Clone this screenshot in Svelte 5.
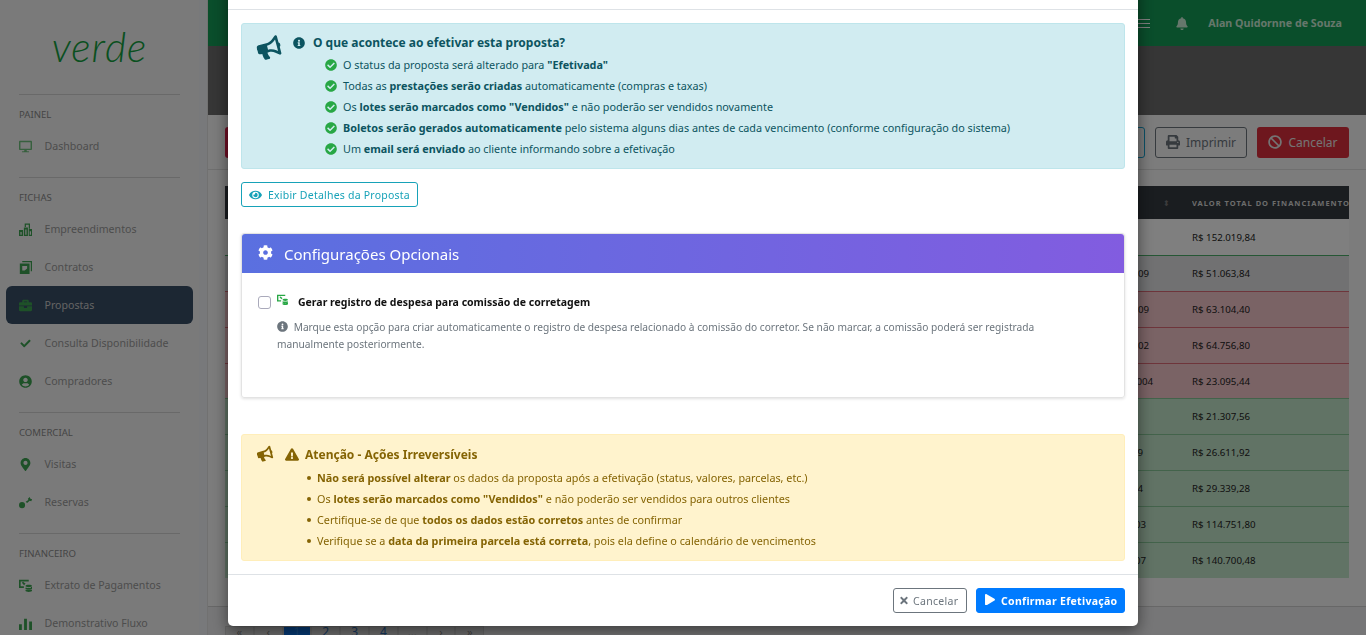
<script>
  const icons = {
    desktop: ["0 0 576 512", "M528 0H48C21.5 0 0 21.5 0 48v320c0 26.5 21.5 48 48 48h192l-16 48h-72c-13.3 0-24 10.7-24 24s10.7 24 24 24h272c13.3 0 24-10.7 24-24s-10.7-24-24-24h-72l-16-48h192c26.5 0 48-21.5 48-48V48c0-26.5-21.5-48-48-48zm-16 352H64V64h448v288z"],
    building: ["0 0 512 512", "M0 272h160v240H0zM192 176h160v336H192zM224 16h208v208h-48V64H272v96h-48zM384 240h128v272H384zM56 352v112h48V352zM248 256v208h48V256zM424 320v144h48V320z"],
    copy: ["0 0 512 512", "M128 0h384v400h-48V48H128zM32 96h384v416H32zM128 200v176h96l96-80V200z"],
    briefcase: ["0 0 512 512", "M320 336c0 8.84-7.16 16-16 16h-96c-8.84 0-16-7.16-16-16v-48H0v144c0 25.6 22.4 48 48 48h416c25.6 0 48-22.4 48-48V288H320v48zm144-208h-80V80c0-25.6-22.4-48-48-48H176c-25.6 0-48 22.4-48 48v48H48c-25.6 0-48 22.4-48 48v80h512v-80c0-25.6-22.4-48-48-48zm-144 0H192V96h128v32z"],
    check: ["-70 -70 652 652", "M173.898 439.404l-166.4-166.4c-9.997-9.997-9.997-26.206 0-36.204l36.203-36.204c9.997-9.998 26.207-9.998 36.204 0L192 312.69 432.095 72.596c9.997-9.997 26.207-9.997 36.204 0l36.203 36.204c9.997 9.997 9.997 26.206 0 36.204l-294.4 294.401c-9.998 9.997-26.207 9.997-36.204-.001z"],
    user: ["0 0 496 512", "M248 8C111 8 0 119 0 256s111 248 248 248 248-111 248-248S385 8 248 8zm0 96c48.6 0 88 39.4 88 88s-39.4 88-88 88-88-39.4-88-88 39.4-88 88-88zm0 344c-58.7 0-111.3-26.6-146.5-68.2 18.8-35.4 55.6-59.8 98.5-59.8 2.4 0 4.8.4 7.1 1.1 13 4.2 26.6 6.9 40.9 6.9 14.3 0 28-2.7 40.9-6.9 2.3-.7 4.7-1.1 7.1-1.1 42.9 0 79.7 24.4 98.5 59.8C359.3 421.4 306.7 448 248 448z"],
    marker: ["0 0 384 512", "M172.268 501.67C26.97 291.031 0 269.413 0 192 0 85.961 85.961 0 192 0s192 85.961 192 192c0 77.413-26.97 99.031-172.268 309.67-9.535 13.774-29.93 13.773-39.464 0zM192 272c44.183 0 80-35.817 80-80s-35.817-80-80-80-80 35.817-80 80 35.817 80 80 80z"],
    key: ["0 0 512 512", "M120 240a120 120 0 1 1 0 240 120 120 0 0 1 0-240zM260 230l110-70-20-50 70-70 30 70 70 20-40 80-60-20-100 90z"],
    money: ["0 0 512 512", "M0 32h384v64H64v192h128v64H0zM112 144l48-32 112 80h-64l32 32-40 24zM256 272c0-26 56-48 128-48s128 22 128 48-56 48-128 48-128-22-128-48zM256 336c30 24 226 24 256 0v44c0 26-56 48-128 48s-128-22-128-48zM256 420c30 24 226 24 256 0v44c0 26-56 48-128 48s-128-22-128-48z"],
    chart: ["0 0 512 512", "M0 288h112v224H0zM200 64h112v448H200zM400 176h112v336H400z"],
    bullhorn: ["0 0 576 512", "M576 240c0-23.63-12.95-44.04-32-55.12V32.01C544 23.26 537.02 0 512 0c-7.12 0-14.19 2.38-19.98 7.02l-85.03 68.03C364.28 109.19 310.67 128 256 128H64c-35.35 0-64 28.65-64 64v96c0 35.35 28.65 64 64 64h33.7c-1.39 10.48-2.18 21.14-2.18 32 0 39.77 9.26 77.35 25.56 110.94 5.19 10.69 16.52 17.06 28.4 17.06h74.28c26.05 0 41.69-29.84 25.9-50.56-16.4-21.52-26.15-48.36-26.15-77.44 0-11.11 1.62-21.79 4.41-32H256c54.67 0 108.28 18.81 150.98 52.95l85.03 68.03a32.023 32.023 0 0 0 19.98 7.02c24.92 0 32-22.78 32-32V295.13C563.05 284.04 576 263.63 576 240zm-96 141.42l-33.05-26.44C392.95 311.78 325.12 288 256 288v-96c69.12 0 136.95-23.78 190.95-66.98L480 98.58v282.84z"],
    info: ["0 0 512 512", "M256 8C119.043 8 8 119.083 8 256c0 136.997 111.043 248 248 248s248-111.003 248-248C504 119.083 392.957 8 256 8zm0 110c23.196 0 42 18.804 42 42s-18.804 42-42 42-42-18.804-42-42 18.804-42 42-42zm56 254c0 6.627-5.373 12-12 12h-88c-6.627 0-12-5.373-12-12v-24c0-6.627 5.373-12 12-12h12v-64h-12c-6.627 0-12-5.373-12-12v-24c0-6.627 5.373-12 12-12h64c6.627 0 12 5.373 12 12v100h12c6.627 0 12 5.373 12 12v24z"],
    circleCheck: ["0 0 512 512", "M504 256c0 136.967-111.033 248-248 248S8 392.967 8 256 119.033 8 256 8s248 111.033 248 248zM227.314 387.314l184-184c6.248-6.248 6.248-16.379 0-22.627l-22.627-22.627c-6.248-6.249-16.379-6.249-22.628 0L216 308.118l-70.059-70.059c-6.248-6.248-16.379-6.248-22.628 0l-22.627 22.627c-6.248 6.248-6.248 16.379 0 22.627l104 104c6.249 6.249 16.379 6.249 22.628.001z"],
    triangle: ["0 0 576 512", "M569.517 440.013C587.975 472.007 564.806 512 527.94 512H48.054c-36.937 0-59.999-40.055-41.577-71.987L246.423 23.985c18.467-32.009 64.72-31.951 83.154 0l239.94 416.028zM288 354c-25.405 0-46 20.595-46 46s20.595 46 46 46 46-20.595 46-46-20.595-46-46-46zm-43.673-165.346l7.418 136c.347 6.364 5.609 11.346 11.982 11.346h48.546c6.373 0 11.635-4.982 11.982-11.346l7.418-136c.375-6.874-5.098-12.654-11.982-12.654h-63.383c-6.884 0-12.356 5.78-11.981 12.654z"],
    eye: ["0 0 576 512", "M572.52 241.4C518.29 135.59 410.93 64 288 64S57.68 135.64 3.48 241.41a32.35 32.35 0 0 0 0 29.19C57.71 376.41 165.07 448 288 448s230.32-71.64 284.52-177.41a32.35 32.35 0 0 0 0-29.19zM288 400a144 144 0 1 1 144-144 143.93 143.93 0 0 1-144 144zm0-240a95.31 95.31 0 0 0-25.31 3.79 47.85 47.85 0 0 1-66.9 66.9A95.78 95.78 0 1 0 288 160z"],
    cog: ["0 0 512 512", "M487.4 315.7l-42.6-24.6c4.3-23.2 4.3-47 0-70.2l42.6-24.6c4.9-2.8 7.1-8.6 5.5-14-11.1-35.6-30-67.8-54.7-94.6-3.8-4.1-10-5.1-14.8-2.3L380.8 110c-17.9-15.4-38.5-27.3-60.8-35.1V25.8c0-5.6-3.9-10.5-9.4-11.7-36.7-8.2-74.3-7.8-109.2 0-5.5 1.2-9.4 6.1-9.4 11.7V75c-22.2 7.9-42.8 19.8-60.8 35.1L88.7 85.5c-4.9-2.8-11-1.9-14.8 2.3-24.7 26.7-43.6 58.9-54.7 94.6-1.7 5.4.6 11.2 5.5 14L67.3 221c-4.3 23.2-4.3 47 0 70.2l-42.6 24.6c-4.9 2.8-7.1 8.6-5.5 14 11.1 35.6 30 67.8 54.7 94.6 3.8 4.1 10 5.1 14.8 2.3l42.6-24.6c17.9 15.4 38.5 27.3 60.8 35.1v49.2c0 5.6 3.9 10.5 9.4 11.7 36.7 8.2 74.3 7.8 109.2 0 5.5-1.2 9.4-6.1 9.4-11.7v-49.2c22.2-7.9 42.8-19.8 60.8-35.1l42.6 24.6c4.9 2.8 11 1.9 14.8-2.3 24.7-26.7 43.6-58.9 54.7-94.6 1.5-5.5-.7-11.3-5.6-14.1zM256 336c-44.1 0-80-35.9-80-80s35.9-80 80-80 80 35.9 80 80-35.9 80-80 80z"],
    times: ["0 0 352 512", "M242.72 256l100.07-100.07c12.28-12.28 12.28-32.19 0-44.48l-22.24-22.24c-12.28-12.28-32.19-12.28-44.48 0L176 189.28 75.93 89.21c-12.28-12.28-32.19-12.28-44.48 0L9.21 111.45c-12.28 12.28-12.28 32.19 0 44.48L109.28 256 9.21 356.07c-12.28 12.28-12.28 32.19 0 44.48l22.24 22.24c12.28 12.28 32.2 12.28 44.48 0L176 322.72l100.07 100.07c12.28 12.28 32.2 12.28 44.48 0l22.24-22.24c12.28-12.28 12.28-32.19 0-44.48L242.72 256z"],
    play: ["0 0 448 512", "M424.4 214.7L72.4 6.6C43.8-10.3 0 6.1 0 47.9V464c0 37.5 40.7 60.1 72.4 41.3l352-208c31.4-18.5 31.5-64.1 0-82.6z"],
    ban: ["0 0 512 512", "M256 8C119.034 8 8 119.033 8 256s111.034 248 248 248 248-111.034 248-248S392.967 8 256 8zm130.108 117.892c65.448 65.448 70 165.481 20.677 235.637L150.47 105.216c70.204-49.356 170.226-44.735 235.638 20.676zM125.892 386.108c-65.448-65.448-70-165.481-20.677-235.637L361.53 406.784c-70.203 49.356-170.226 44.736-235.638-20.676z"],
    print: ["0 0 512 512", "M448 192V77.25c0-8.49-3.37-16.62-9.37-22.63L393.37 9.37c-6-6-14.14-9.37-22.63-9.37H96C78.33 0 64 14.33 64 32v160c-35.35 0-64 28.65-64 64v112c0 8.84 7.16 16 16 16h48v96c0 17.67 14.33 32 32 32h320c17.67 0 32-14.33 32-32v-96h48c8.84 0 16-7.16 16-16V256c0-35.35-28.65-64-64-64zm-64 256H128v-96h256v96zm0-224H128V64h192v48c0 8.84 7.16 16 16 16h48v96zm48 72c-13.25 0-24-10.75-24-24 0-13.26 10.75-24 24-24s24 10.74 24 24c0 13.25-10.75 24-24 24z"],
    bell: ["0 0 448 512", "M224 512c35.32 0 63.97-28.65 63.97-64H160.03c0 35.35 28.65 64 63.97 64zm215.39-149.71c-19.32-20.76-55.47-51.99-55.47-154.29 0-77.7-54.48-139.9-127.94-155.16V32c0-17.67-14.32-32-31.98-32s-31.98 14.33-31.98 32v20.84C118.56 68.1 64.08 130.3 64.08 208c0 102.3-36.15 133.53-55.47 154.29-6 6.45-8.66 14.16-8.61 21.71.11 16.4 12.98 32 32.1 32h383.8c19.12 0 32-15.6 32.1-32 .05-7.55-2.61-15.27-8.61-21.71z"]
  };

  const nav = [
    { title: "PAINEL", items: [{ label: "Dashboard", icon: "desktop", light: true }] },
    {
      title: "FICHAS",
      items: [
        { label: "Empreendimentos", icon: "building" },
        { label: "Contratos", icon: "copy" },
        { label: "Propostas", icon: "briefcase", active: true },
        { label: "Consulta Disponibilidade", icon: "check" },
        { label: "Compradores", icon: "user" }
      ]
    },
    {
      title: "COMERCIAL",
      items: [
        { label: "Visitas", icon: "marker" },
        { label: "Reservas", icon: "key" }
      ]
    },
    {
      title: "FINANCEIRO",
      items: [
        { label: "Extrato de Pagamentos", icon: "money" },
        { label: "Demonstrativo Fluxo", icon: "chart" }
      ]
    }
  ];

  // end: how far the partly hidden text of the column reaches past the modal edge
  const rows = [
    { doc: "", end: 0, value: "R$ 152.019,84", tone: "plain" },
    { doc: "09", end: 43, value: "R$ 51.063,84", tone: "grey" },
    { doc: "09", end: 43, value: "R$ 63.104,40", tone: "red" },
    { doc: "02", end: 43, value: "R$ 64.756,80", tone: "red" },
    { doc: "004", end: 39, value: "R$ 23.095,44", tone: "red" },
    { doc: "", end: 0, value: "R$ 21.307,56", tone: "green" },
    { doc: "9", end: 49, value: "R$ 26.611,92", tone: "green" },
    { doc: "4", end: 49, value: "R$ 29.339,28", tone: "green" },
    { doc: "03", end: 46, value: "R$ 114.751,80", tone: "green" },
    { doc: "07", end: 46, value: "R$ 140.700,48", tone: "green" }
  ];

  const pages = ["«", "‹", "1", "2", "3", "4", "...", "›", "»"];
</script>

{#snippet icon(name, cls)}
  <svg class={cls} viewBox={icons[name][0]} fill="currentColor" aria-hidden="true"><path d={icons[name][1]} /></svg>
{/snippet}

<div class="page">
  <aside class="sidebar">
    <div class="nav-scroll">
      <div class="logo">verde</div>
      {#each nav as group}
        <div class="group">
          <div class="group-title">{group.title}</div>
          {#each group.items as item}
            <div class="nav-item" class:active={item.active}>
              {@render icon(item.icon, item.light ? "nav-icon light" : "nav-icon")}
              <span>{item.label}</span>
            </div>
          {/each}
        </div>
      {/each}
    </div>
    <div class="scrollbar"></div>
  </aside>

  <main class="main">
    <header class="topbar">
      <div class="burger"><i></i><i></i><i></i></div>
      {@render icon("bell", "bell")}
      <span class="user">Alan Quidornne de Souza</span>
    </header>
    <div class="hero"></div>
    <section class="content">
      <div class="toolbar">
        <button class="tb danger-left" aria-label="Ação"></button>
        <span class="grow"></span>
        <button class="tb info-edge" aria-label="Ação"></button>
        <button class="tb outline">{@render icon("print", "tb-icon")} Imprimir</button>
        <button class="tb danger">{@render icon("ban", "tb-icon")} Cancelar</button>
      </div>
      <div class="table">
        <div class="thead">
          <span class="sort">⬍</span>
          <span class="th">VALOR TOTAL DO FINANCIAMENTO</span>
        </div>
        {#each rows as row}
          <div class="tr {row.tone}">
            <span class="doc" style="padding-right: {row.end}px">{row.doc}</span>
            <span class="val">{row.value}</span>
          </div>
        {/each}
      </div>
      <div class="pager-wrap">
        <div class="pager">
          {#each pages as p}
            <span class="pg" class:current={p === "1"} class:num={/\d/.test(p)}>{p}</span>
          {/each}
        </div>
      </div>
    </section>
  </main>
</div>

<div class="overlay">
  <div class="modal">
    <div class="modal-head"></div>
    <div class="modal-body">
      <div class="alert info-box">
        {@render icon("bullhorn", "horn")}
        <div class="alert-text">
          <h6>{@render icon("info", "h-icon")} O que acontece ao efetivar esta proposta?</h6>
          <ul class="checks">
            <li>{@render icon("circleCheck", "ok")}<span>O status da proposta será alterado para <b>"Efetivada"</b></span></li>
            <li>{@render icon("circleCheck", "ok")}<span>Todas as <b>prestações serão criadas</b> automaticamente (compras e taxas)</span></li>
            <li>{@render icon("circleCheck", "ok")}<span>Os <b>lotes serão marcados como "Vendidos"</b> e não poderão ser vendidos novamente</span></li>
            <li>{@render icon("circleCheck", "ok")}<span><b>Boletos serão gerados automaticamente</b> pelo sistema alguns dias antes de cada vencimento (conforme configuração do sistema)</span></li>
            <li>{@render icon("circleCheck", "ok")}<span>Um <b>email será enviado</b> ao cliente informando sobre a efetivação</span></li>
          </ul>
        </div>
      </div>

      <button class="details">{@render icon("eye", "eye")} Exibir Detalhes da Proposta</button>

      <div class="card">
        <div class="card-head">{@render icon("cog", "cog")}<span>Configurações Opcionais</span></div>
        <div class="card-body">
          <label class="opt">
            <span class="box"></span>
            {@render icon("money", "opt-icon")}
            <strong>Gerar registro de despesa para comissão de corretagem</strong>
          </label>
          <p class="hint">{@render icon("info", "hint-icon")} Marque esta opção para criar automaticamente o registro de despesa relacionado à comissão do corretor. Se não marcar, a comissão poderá ser registrada manualmente posteriormente.</p>
        </div>
      </div>

      <div class="alert warn-box">
        {@render icon("bullhorn", "horn small")}
        <div class="alert-text">
          <h6>{@render icon("triangle", "h-icon tri")} Atenção - Ações Irreversíveis</h6>
          <ul class="dots">
            <li><b>Não será possível alterar</b> os dados da proposta após a efetivação (status, valores, parcelas, etc.)</li>
            <li>Os <b>lotes serão marcados como "Vendidos"</b> e não poderão ser vendidos para outros clientes</li>
            <li>Certifique-se de que <b>todos os dados estão corretos</b> antes de confirmar</li>
            <li>Verifique se a <b>data da primeira parcela está correta</b>, pois ela define o calendário de vencimentos</li>
          </ul>
        </div>
      </div>
    </div>
    <div class="modal-foot">
      <button class="btn-cancel">{@render icon("times", "x")} Cancelar</button>
      <button class="btn-confirm">{@render icon("play", "play")} Confirmar Efetivação</button>
    </div>
  </div>
</div>

<style>
  :global(body) {
    margin: 0;
    overflow: hidden;
    font-family: "Noto Sans", "Open Sans", sans-serif;
  }

  .page {
    display: flex;
    width: 1366px;
    height: 635px;
    overflow: hidden;
    background: #f6f6f6;
  }

  .sidebar {
    display: flex;
    flex: 0 0 208px;
    height: 635px;
    overflow: hidden;
    background: #f5f5f5;
    border-right: 1px solid #e3e3e3;
    box-sizing: border-box;
  }

  .nav-scroll {
    flex: 1;
    padding: 0 6px;
    min-width: 0;
  }

  .scrollbar {
    flex: 0 0 8px;
    background: #f1f3f7;
  }

  .logo {
    height: 94px;
    box-sizing: border-box;
    padding-top: 22px;
    text-align: center;
    font-family: "Lato", sans-serif;
    font-style: italic;
    font-weight: 300;
    font-size: 41px;
    line-height: 50px;
    letter-spacing: 1px;
    color: #14a03f;
  }

  .group {
    margin: 0 13px;
    border-top: 1px solid #d3d3d3;
    padding-top: 13px;
    height: 69px;
  }

  .group:nth-of-type(3) {
    height: 221px;
  }

  .group:nth-of-type(4),
  .group:nth-of-type(5) {
    height: 107px;
  }

  .group-title {
    font-size: 9.6px;
    line-height: 14px;
    color: #8a8a8a;
    margin-bottom: 5px;
  }

  .nav-item {
    display: flex;
    align-items: center;
    height: 38px;
    margin: 0 -13px;
    padding: 0 13px;
    font-size: 10.6px;
    color: #9a9a9a;
    border-radius: 6px;
  }

  .nav-item.active {
    background: #384e66;
    color: #c8c8c8;
  }

  .nav-icon {
    width: 13px;
    height: 13px;
    margin-right: 12.5px;
    flex: none;
    color: #3ca351;
  }

  .nav-icon.light {
    color: #6fc07d;
  }

  .main {
    flex: 1;
    min-width: 0;
    display: flex;
    flex-direction: column;
  }

  .topbar {
    display: flex;
    flex: none;
    align-items: center;
    justify-content: flex-end;
    height: 46px;
    padding-right: 24px;
    background: #149c57;
    color: #cdeed8;
    font-size: 10.7px;
    font-weight: 700;
  }

  .burger {
    width: 12px;
    margin-right: 26px;
  }

  .burger i {
    display: block;
    height: 1px;
    background: #fff;
    margin: 3px 0;
  }

  .bell {
    width: 12px;
    height: 13px;
    margin-right: 20px;
  }

  .hero {
    flex: none;
    height: 69px;
    background: #6c6c6c;
  }

  .content {
    flex: 1;
    background: #f8f8f8;
    display: flex;
    flex-direction: column;
    min-height: 0;
  }

  .toolbar {
    display: flex;
    flex: none;
    align-items: center;
    gap: 10px;
    height: 55px;
    box-sizing: border-box;
    padding: 0 17px;
    border-bottom: 1px solid #dedede;
  }

  .grow {
    flex: 1;
  }

  .tb {
    display: flex;
    align-items: center;
    justify-content: center;
    gap: 6px;
    height: 31px;
    padding: 0;
    box-sizing: border-box;
    border-radius: 3px;
    font-family: inherit;
    font-size: 12px;
    background: transparent;
    border: 1px solid transparent;
  }

  .danger-left {
    width: 60px;
    background: #e01e4a;
  }

  .info-edge {
    width: 60px;
    border-color: #17a2cf;
  }

  .outline {
    width: 92px;
    border-color: #6c757d;
    color: #6c757d;
  }

  .danger {
    width: 92px;
    background: #dc2f3c;
    color: #e9e9e9;
  }

  .tb-icon {
    width: 14px;
    height: 14px;
  }

  .table {
    flex: none;
    margin: 16px 17px 0;
    font-size: 9.7px;
    color: #222;
  }

  .thead {
    display: flex;
    align-items: center;
    height: 33px;
    background: #343a40;
    color: #d8d8d8;
  }

  .sort {
    margin-left: auto;
    font-size: 8px;
    color: #777;
    width: 29px;
  }

  .th {
    width: 157px;
    overflow: hidden;
    white-space: nowrap;
    font-size: 7.5px;
    font-weight: 700;
    letter-spacing: 1px;
  }

  .tr {
    display: flex;
    align-items: center;
    justify-content: flex-end;
    height: 35.9px;
    box-sizing: border-box;
    border-top: 1px solid transparent;
    background: #fff;
  }

  .doc {
    flex: 1;
    text-align: right;
  }

  .val {
    width: 157px;
  }

  .tr.grey {
    background: #e2e3e5;
    border-top-color: #4cae6a;
  }

  .tr.red {
    background: #f5c6cb;
    border-top-color: #dc6a76;
  }

  .tr.green {
    background: #c3e6cb;
    border-top-color: #86c796;
  }

  .pager-wrap {
    flex: 1;
    margin-top: 28px;
    border-top: 1px solid #cfcfcf;
    padding: 19px 17px 0;
    background: #ececee;
  }

  .pager {
    display: flex;
    font-size: 11px;
    color: #2c6fbb;
  }

  .pg {
    width: 28.8px;
    height: 30px;
    line-height: 10px;
    text-align: center;
    box-sizing: border-box;
    border: 1px solid #ccc;
    background: #dcdcdc;
    color: #888;
  }

  .pg.num {
    color: #2c6fbb;
    font-size: 12px;
  }

  .pg.current {
    background: #0a72e8;
    color: #2a8cf0;
  }

  .overlay {
    position: fixed;
    inset: 0;
    overflow: hidden;
    display: flex;
    align-items: flex-end;
    justify-content: center;
    padding-bottom: 9px;
    box-sizing: border-box;
    background: rgba(0, 0, 0, 0.5);
  }

  .modal {
    width: 910px;
    flex: none;
    background: #fff;
    border-radius: 5px;
    box-shadow: 0 5px 15px rgba(0, 0, 0, 0.5);
    color: #212529;
  }

  .modal-head {
    height: 60px;
    border-bottom: 1px solid #dee2e6;
  }

  .modal-body {
    padding: 13px;
  }

  .alert {
    display: flex;
    border-radius: 3px;
    border: 1px solid;
    font-size: 10.8px;
    box-sizing: border-box;
  }

  .alert h6 {
    display: flex;
    align-items: center;
    margin: 0;
    font-size: 12px;
    line-height: 17px;
    font-weight: 700;
  }

  .info-box {
    height: 146px;
    padding: 10px 15px;
    background: #d1ecf1;
    border-color: #bee5eb;
    color: #0c5460;
  }

  .horn {
    width: 24px;
    height: 22px;
    margin: 3px 12px 0 0;
    flex: none;
    transform: rotate(-15deg);
  }

  .horn.small {
    width: 16px;
    height: 14px;
    margin: 1px 12px 0 0;
  }

  .h-icon {
    width: 12px;
    height: 12px;
    margin-right: 8px;
    flex: none;
  }

  .h-icon.tri {
    width: 14px;
    height: 13px;
    margin-right: 6px;
  }

  .checks,
  .dots {
    list-style: none;
    margin: 0;
    padding: 0;
  }

  .checks {
    margin: 3px 0 0 32px;
  }

  .checks li {
    display: flex;
    align-items: center;
    height: 21px;
  }

  .ok {
    width: 12px;
    height: 12px;
    margin-right: 6px;
    color: #28a745;
    flex: none;
  }

  .details {
    display: flex;
    align-items: center;
    gap: 6px;
    height: 25px;
    margin-top: 13px;
    padding: 0 7px;
    box-sizing: border-box;
    background: #fff;
    border: 1px solid #17a2b8;
    border-radius: 3px;
    color: #17a2b8;
    font-family: inherit;
    font-size: 10.5px;
    letter-spacing: 0.22px;
  }

  .eye {
    width: 13px;
    height: 12px;
  }

  .card {
    margin-top: 26px;
    height: 165px;
    box-sizing: border-box;
    border: 1px solid #e3e3e3;
    border-radius: 3px;
    box-shadow: 0 1px 3px rgba(0, 0, 0, 0.12);
  }

  .card-head {
    display: flex;
    align-items: center;
    height: 39px;
    padding: 0 16px;
    color: #fff;
    font-size: 15px;
    background: linear-gradient(90deg, #5a70e0, #825ce0);
    border-radius: 3px 3px 0 0;
  }

  .cog {
    width: 15px;
    height: 15px;
    margin: -3px 11px 0 0;
  }

  .card-body {
    padding: 22px 16px;
  }

  .opt {
    display: flex;
    align-items: center;
    font-size: 10.5px;
    color: #111;
  }

  .box {
    width: 13px;
    height: 13px;
    box-sizing: border-box;
    border: 1px solid #aab;
    border-radius: 3px;
    margin-right: 6px;
  }

  .opt-icon {
    width: 11px;
    height: 11px;
    margin: -5px 10px 0 0;
    color: #28a745;
  }

  .hint {
    margin: 10px 30px 0 19px;
    font-size: 10.2px;
    line-height: 17px;
    color: #6c757d;
  }

  .hint-icon {
    width: 11px;
    height: 11px;
    margin-right: 3px;
    vertical-align: -1px;
  }

  .warn-box {
    margin-top: 36px;
    height: 127px;
    padding: 11px 15px;
    background: #fff3cd;
    border-color: #ffeeba;
    color: #856404;
  }

  .warn-box .horn {
    margin-right: 12px;
  }

  .dots {
    margin: 4px 0 0 22px;
  }

  .dots li {
    height: 21px;
    line-height: 21px;
    padding-left: 10px;
    position: relative;
  }

  .dots li::before {
    content: "";
    position: absolute;
    left: 0;
    top: 9px;
    width: 4px;
    height: 4px;
    border-radius: 50%;
    background: #856404;
  }

  .modal-foot {
    display: flex;
    justify-content: flex-end;
    align-items: center;
    gap: 9px;
    height: 51px;
    padding: 0 13px;
    border-top: 1px solid #dee2e6;
  }

  .btn-cancel,
  .btn-confirm {
    display: flex;
    align-items: center;
    height: 25px;
    box-sizing: border-box;
    font-family: inherit;
    font-size: 10.5px;
    border-radius: 3px;
    letter-spacing: 0.3px;
    white-space: nowrap;
  }

  .btn-cancel {
    width: 74px;
    gap: 5px;
    padding: 0 6px;
    background: #fff;
    border: 1px solid #6c757d;
    color: #6c757d;
  }

  .btn-confirm {
    width: 149px;
    gap: 6px;
    padding: 0 0 0 8px;
    background: #007bff;
    border: 1px solid #007bff;
    color: #fff;
    font-weight: 700;
  }

  .x {
    width: 8px;
    height: 11px;
  }

  .play {
    flex: none;
    width: 10px;
    height: 11.4px;
    margin-top: -2px;
  }
</style>
